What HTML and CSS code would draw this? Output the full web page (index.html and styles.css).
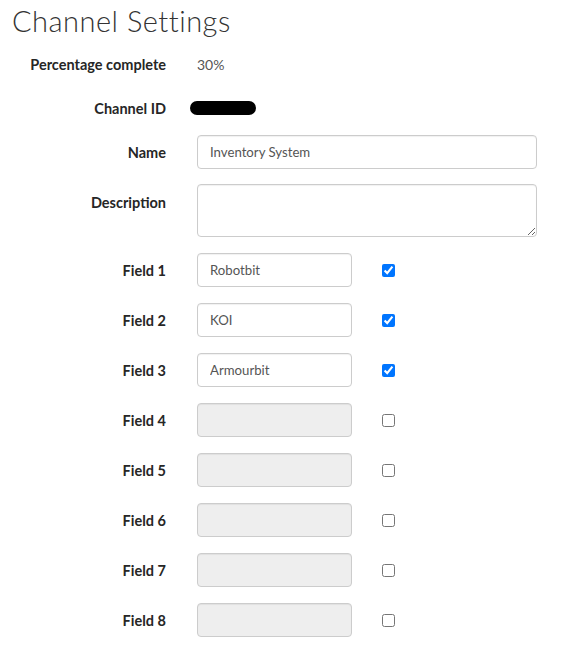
FILE: index.html
```html
<!DOCTYPE html>
<html lang="en">
<head>
<meta charset="utf-8">
<title>Channel Settings</title>
<link rel="stylesheet" href="styles.css">
</head>
<body>
<div class="page">
  <h1 class="title">Channel Settings</h1>
  <form class="form">
    <div class="row row-static">
      <label class="label">Percentage complete</label>
      <div class="value">30%</div>
    </div>
    <div class="row row-static">
      <label class="label">Channel ID</label>
      <div class="value"><span class="redacted"></span></div>
    </div>
    <div class="row row-name">
      <label class="label">Name</label>
      <input class="control wide" type="text" value="Inventory System">
    </div>
    <div class="row row-top">
      <label class="label label-top">Description</label>
      <textarea class="control wide area"></textarea>
    </div>
    <div class="row">
      <label class="label">Field 1</label>
      <input class="control field" type="text" value="Robotbit">
      <input class="check" type="checkbox" checked>
    </div>
    <div class="row">
      <label class="label">Field 2</label>
      <input class="control field" type="text" value="KOI">
      <input class="check" type="checkbox" checked>
    </div>
    <div class="row">
      <label class="label">Field 3</label>
      <input class="control field" type="text" value="Armourbit">
      <input class="check" type="checkbox" checked>
    </div>
    <div class="row">
      <label class="label">Field 4</label>
      <input class="control field" type="text" disabled>
      <input class="check" type="checkbox">
    </div>
    <div class="row">
      <label class="label">Field 5</label>
      <input class="control field" type="text" disabled>
      <input class="check" type="checkbox">
    </div>
    <div class="row">
      <label class="label">Field 6</label>
      <input class="control field" type="text" disabled>
      <input class="check" type="checkbox">
    </div>
    <div class="row">
      <label class="label">Field 7</label>
      <input class="control field" type="text" disabled>
      <input class="check" type="checkbox">
    </div>
    <div class="row">
      <label class="label">Field 8</label>
      <input class="control field" type="text" disabled>
      <input class="check" type="checkbox">
    </div>
  </form>
</div>
</body>
</html>
```

FILE: styles.css
```css
* { box-sizing: border-box; }

html, body {
  margin: 0;
  padding: 0;
  background: #fff;
}

body {
  font-family: Lato, "Open Sans", "Liberation Sans", sans-serif;
  color: #333;
}

.page {
  padding: 4px 0 0 12px;
}

.title {
  margin: 0;
  font-family: Lato, "Open Sans", sans-serif;
  font-weight: 300;
  font-size: 29px;
  line-height: 34px;
  color: #333;
  letter-spacing: 0.5px;
}

.form {
  display: flex;
  flex-direction: column;
  margin-top: 9px;
}

.row {
  display: flex;
  align-items: center;
  min-height: 34px;
  margin-bottom: 16px;
}

.row-static {
  margin-bottom: 10px;
}

.row-name {
  margin-bottom: 15px;
}

.row-top {
  align-items: flex-start;
}

.label {
  width: 154px;
  flex: none;
  text-align: right;
  font-weight: 700;
  font-size: 14.5px;
  color: #262626;
}

.label-wide {
  letter-spacing: 0.2px;
}

.label-top {
  padding-top: 10px;
}

.value {
  margin-left: 31px;
  font-size: 14px;
  color: #555;
  display: flex;
  align-items: center;
}

.redacted {
  display: block;
  width: 66px;
  height: 14px;
  border-radius: 7px;
  background: #000;
  margin-left: -7px;
}

.control {
  margin: 0 0 0 31px;
  height: 34px;
  padding: 6px 12px;
  border: 1px solid #ccc;
  border-radius: 4px;
  background: #fff;
  font-family: Lato, "Open Sans", sans-serif;
  font-size: 13.2px;
  color: #555;
  box-shadow: inset 0 1px 1px rgba(0, 0, 0, 0.06);
  outline: none;
}

.control:disabled {
  background: #eee;
}

.wide {
  width: 340px;
}

.area {
  height: 53px;
  resize: vertical;
}

.field {
  width: 155px;
}

.check {
  margin: 0 0 0 30px;
  width: 13px;
  height: 13px;
}
```
